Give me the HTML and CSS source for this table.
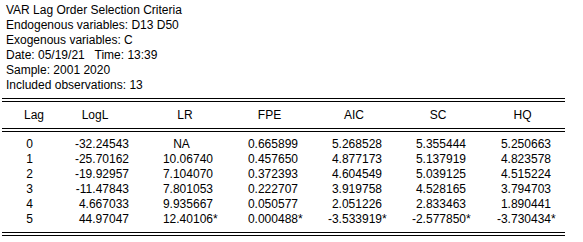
FILE: index.html
```html
<!DOCTYPE html>
<html>
<head>
<meta charset="utf-8">
<link rel="stylesheet" href="styles.css">
</head>
<body>
<div class="page">
  <div class="info">
    <div>VAR Lag Order Selection Criteria</div>
    <div>Endogenous variables: D13 D50 </div>
    <div>Exogenous variables: C </div>
    <div>Date: 05/19/21&nbsp;&nbsp; Time: 13:39</div>
    <div>Sample: 2001 2020</div>
    <div>Included observations: 13</div>
  </div>
  <div class="dbl"></div>
  <div class="grid head">
    <div class="h lag">Lag</div>
    <div class="h logl">LogL</div>
    <div class="h">LR</div>
    <div class="h">FPE</div>
    <div class="h">AIC</div>
    <div class="h">SC</div>
    <div class="h">HQ</div>
  </div>
  <div class="dbl"></div>
  <div class="grid body">
    <div class="c lag">0</div><div class="c">-32.24543<span class="m"></span></div><div class="c na">NA</div><div class="c">0.665899<span class="m"></span></div><div class="c">5.268528<span class="m"></span></div><div class="c">5.355444<span class="m"></span></div><div class="c">5.250663<span class="m"></span></div>
    <div class="c lag">1</div><div class="c">-25.70162<span class="m"></span></div><div class="c">10.06740<span class="m"></span></div><div class="c">0.457650<span class="m"></span></div><div class="c">4.877173<span class="m"></span></div><div class="c">5.137919<span class="m"></span></div><div class="c">4.823578<span class="m"></span></div>
    <div class="c lag">2</div><div class="c">-19.92957<span class="m"></span></div><div class="c">7.104070<span class="m"></span></div><div class="c">0.372393<span class="m"></span></div><div class="c">4.604549<span class="m"></span></div><div class="c">5.039125<span class="m"></span></div><div class="c">4.515224<span class="m"></span></div>
    <div class="c lag">3</div><div class="c">-11.47843<span class="m"></span></div><div class="c">7.801053<span class="m"></span></div><div class="c">0.222707<span class="m"></span></div><div class="c">3.919758<span class="m"></span></div><div class="c">4.528165<span class="m"></span></div><div class="c">3.794703<span class="m"></span></div>
    <div class="c lag">4</div><div class="c">4.667033<span class="m"></span></div><div class="c">9.935667<span class="m"></span></div><div class="c">0.050577<span class="m"></span></div><div class="c">2.051226<span class="m"></span></div><div class="c">2.833463<span class="m"></span></div><div class="c">1.890441<span class="m"></span></div>
    <div class="c lag">5</div><div class="c">44.97047<span class="m"></span></div><div class="c">12.40106<span class="m">*</span></div><div class="c">0.000488<span class="m">*</span></div><div class="c">-3.533919<span class="m">*</span></div><div class="c">-2.577850<span class="m">*</span></div><div class="c">-3.730434<span class="m">*</span></div>
  </div>
  <div class="dbl"></div>
</div>
</body>
</html>
```
FILE: styles.css
```css
html, body {
  margin: 0;
  padding: 0;
  background: #fff;
}
.page {
  font-family: "Liberation Sans", Arial, sans-serif;
  font-size: 12px;
  line-height: 15px;
  color: #000;
  padding: 3px 0 0 2px;
  width: 563px;
}
.info {
  padding-left: 4px;
  padding-bottom: 5px;
  white-space: nowrap;
}
.dbl {
  height: 2px;
  border-top: 1px solid #000;
  border-bottom: 1px solid #000;
}
.grid {
  display: grid;
  grid-template-columns: 58px 83px 84px 85px 84px 84px 85px;
}
.head {
  height: 26px;
  align-items: center;
}
.h {
  text-align: center;
}
.h.lag {
  padding-left: 6px;
}
.h.logl {
  padding-right: 13px;
}
.body {
  padding: 5px 0 5px 0;
}
.c {
  text-align: right;
  padding-right: 9px;
  white-space: nowrap;
}
.c.lag {
  text-align: center;
  padding-right: 3px;
}
.c.na {
  text-align: center;
  padding-right: 7px;
}
.m {
  display: inline-block;
  width: 5px;
  text-align: left;
}
```
